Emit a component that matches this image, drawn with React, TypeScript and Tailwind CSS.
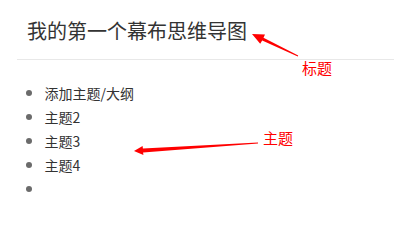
const items = ["添加主题/大纲", "主题2", "主题3", "主题4", ""];

function Annotations() {
  return (
    <svg
      className="absolute left-0 top-0 pointer-events-none"
      width={394}
      height={213}
      viewBox="0 0 394 213"
    >
      {/* arrow to the title */}
      <polygon
        fill="#ff0000"
        points="252,34 265,34.5 263.5,37.8 298.2,55.6 297.8,56.5 262.2,40.6 260.2,43.8"
      />
      {/* arrow to the topics */}
      <polygon
        fill="#ff0000"
        points="134,151 142.6,146 142.9,148.4 258,142.4 258,143.6 143.1,152.6 143.4,155"
      />
    </svg>
  );
}

export default function App() {
  return (
    <div
      className="relative w-[394px] h-[213px] bg-white overflow-hidden"
      style={{ fontFamily: '"Noto Sans CJK SC", "Noto Sans", sans-serif' }}
    >
      <div className="pl-[17px]">
        <div className="h-[60px] pt-[17px] pl-[10px] border-b border-[#e8e8e8]">
          <h1 className="text-[20px] leading-[28px] text-[#333333] font-normal">我的第一个幕布思维导图</h1>
        </div>
        <ul className="mt-[21px]">
          {items.map((text, i) => (
            <li key={i} className="flex items-center h-[24px] text-[14px] text-[#333333]">
              <span className="ml-[8.5px] w-[6px] h-[6px] rounded-full bg-[#6b6b6b] shrink-0" />
              <span className="ml-[13px]">{text}</span>
            </li>
          ))}
        </ul>
      </div>
      <Annotations />
      <span className="absolute left-[302px] top-[59px] text-[15px] leading-[17px] text-[#ff0000]">标题</span>
      <span className="absolute left-[263px] top-[129px] text-[15px] leading-[17px] text-[#ff0000]">主题</span>
    </div>
  );
}
